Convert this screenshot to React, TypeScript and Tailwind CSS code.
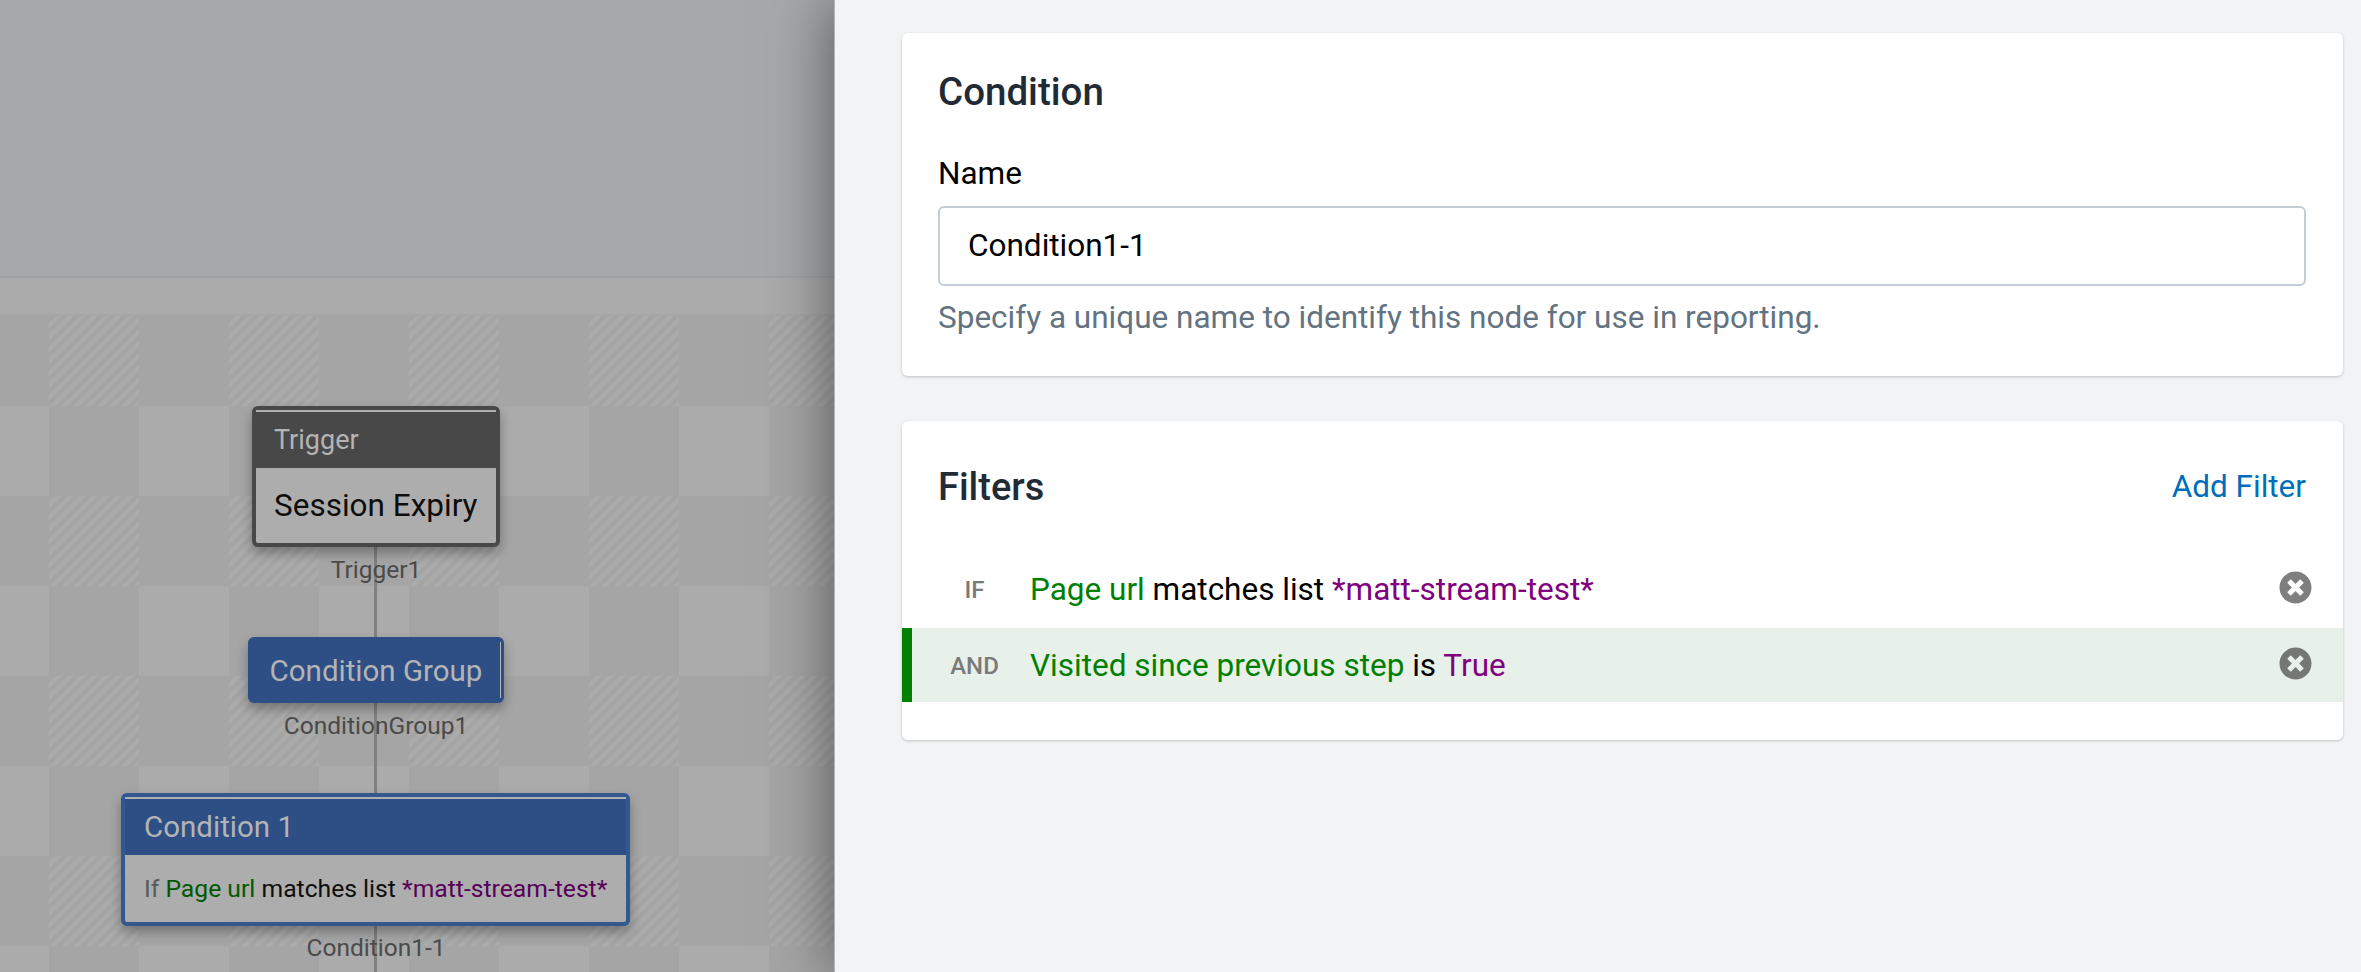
import React from "react";
import { FaTimesCircle } from "react-icons/fa";

const ROWS = [0, 1, 2, 3, 4, 5, 6, 7];
const COLS = [0, 1, 2, 3, 4, 5, 6, 7, 8, 9];

function Cell({ row, col }: { row: number; col: number }) {
  if (row % 2 === 1) {
    return <div className={col % 2 === 0 ? "bg-[#ababab]" : "bg-[#a5a5a5]"} />;
  }
  if (col % 2 === 1) {
    return (
      <div className="bg-[repeating-linear-gradient(135deg,#a4a4a4_0px,#a4a4a4_4.25px,#ababab_4.25px,#ababab_8.5px)]" />
    );
  }
  return <div className="bg-[#a5a5a5]" />;
}

function Label({ top, children }: { top: string; children: React.ReactNode }) {
  return <div className={`absolute left-[176px] w-[400px] text-center text-[24.5px] leading-[26px] text-[#4a4a4a] ${top}`}>{children}</div>;
}

function Filter({ tag, active, height, children }: { tag: string; active?: boolean; height: string; children: React.ReactNode }) {
  return (
    <div className={`flex items-center text-[31.5px] ${height} ${active ? "border-l-[10px] border-[#008000] bg-[#e8f1e9]" : "border-l-[10px] border-transparent"}`}>
      <div className="w-[118px] pl-[7px] pt-[1px] text-center text-[24px] font-medium text-[#7a7a7a]">{tag}</div>
      <div className="flex-1 text-black">{children}</div>
      <FaTimesCircle className="mb-[3px] mr-[31px] text-[33px] text-[#000000]/50" />
    </div>
  );
}

export default function App() {
  return (
    <div className="flex h-[972px] w-full overflow-hidden bg-[#f1f3f5] font-['Roboto',sans-serif]">
      <div className="relative flex w-[834px] shrink-0 flex-col overflow-hidden">
        <div className="h-[278px] shrink-0 border-b-2 border-[#a0a1a2] bg-[#a7a8aa]" />
        <div className="h-[38px] shrink-0 border-b-2 border-[#a6a6a6] bg-[#ababab]" />
        <div className="relative flex-1 overflow-hidden">
          <div className="ml-[-41px] grid w-[900px] grid-cols-[repeat(10,90px)] auto-rows-[90px]">
            {ROWS.map((r) => COLS.map((c) => <Cell key={`${r}-${c}`} row={r} col={c} />))}
          </div>

          <div className="absolute left-[374px] top-[231px] h-[500px] w-[3px] bg-[#808080]" />

          <div className="absolute left-[252px] top-[90px] h-[141px] w-[248px] rounded-[6px] border-4 border-[#484848] bg-[#adadad] shadow-[0_6px_12px_rgba(0,0,0,0.3)]">
            <div className="flex h-[58px] items-center border-t-2 border-[#b0b0b0] bg-[#484848] pl-[18px] text-[27px] text-[#b4b4b4]">Trigger</div>
            <div className="flex h-[75px] items-center pl-[18px] text-[31.5px] text-[#0d0d0d]">Session Expiry</div>
          </div>
          <Label top="top-[241px]">Trigger1</Label>

          <div className="absolute left-[248px] top-[321px] flex h-[66px] w-[256px] items-center justify-center rounded-[6px] bg-[#2d4f85] pt-[2px] text-[29.5px] text-[#b4b4b4] shadow-[0_6px_12px_rgba(0,0,0,0.3)]">
            Condition Group
            <div className="absolute bottom-[5px] right-[3px] top-[5px] w-px bg-[#b4b4b4]" />
          </div>
          <Label top="top-[397px]">ConditionGroup1</Label>

          <div className="absolute left-[121px] top-[477px] h-[133px] w-[509px] rounded-[6px] border-4 border-[#34578f] bg-[#adadad] shadow-[0_6px_12px_rgba(0,0,0,0.3)]">
            <div className="flex h-[58px] items-center border-t-2 border-[#b0b0b0] bg-[#2d4f85] pl-[19px] text-[29.5px] text-[#b4b4b4]">Condition 1</div>
            <div className="flex h-[67px] items-center pl-[19px] text-[24.7px] text-[#0d0d0d]">
              <span>
                <span className="text-[#5a5a5a]">If </span>
                <span className="text-[#005800]">Page url</span> matches list{" "}
                <span className="text-[#580058]">*matt-stream-test*</span>
              </span>
            </div>
          </div>
          <Label top="top-[619px]">Condition1-1</Label>
        </div>
      </div>

      <div className="relative flex flex-1 flex-col gap-[45px] border-l border-[#b5b5b5] pl-[67px] pr-[18px] pt-[33px] shadow-[0_0_60px_rgba(0,0,0,0.5)]">
        <div className="h-[343px] rounded-[6px] bg-white pl-[36px] pr-[37px] pt-[37px] shadow-[0_1px_3px_rgba(0,0,0,0.2)]">
          <h2 className="text-[38.5px] font-medium leading-[44px] text-[#212b36]">Condition</h2>
          <div className="mt-[40px] text-[31.5px] leading-[40px] text-black">Name</div>
          <div className="mt-[12px] flex h-[80px] items-center rounded-[6px] border-2 border-[#c4cdd5] pl-[28px] text-[31.5px] text-black">Condition1-1</div>
          <div className="mt-[12px] text-[31.5px] leading-[40px] text-[#637381]">Specify a unique name to identify this node for use in reporting.</div>
        </div>
        <div className="h-[319px] rounded-[6px] bg-white pt-[42px] shadow-[0_1px_3px_rgba(0,0,0,0.2)]">
          <div className="flex items-center justify-between pl-[36px] pr-[37px]">
            <h2 className="text-[38px] font-medium leading-[44px] text-[#212b36]">Filters</h2>
            <a className="text-[31.5px] text-[#006fbb]">Add Filter</a>
          </div>
          <div className="mt-[40px]">
            <Filter tag="IF" height="h-[78px]">
              <span className="text-[#008000]">Page url</span> matches list <span className="text-[#800080]">*matt-stream-test*</span>
            </Filter>
            <Filter tag="AND" active height="h-[74px]">
              <span className="text-[#008000]">Visited since previous step</span> is <span className="text-[#800080]">True</span>
            </Filter>
          </div>
        </div>
      </div>
    </div>
  );
}
